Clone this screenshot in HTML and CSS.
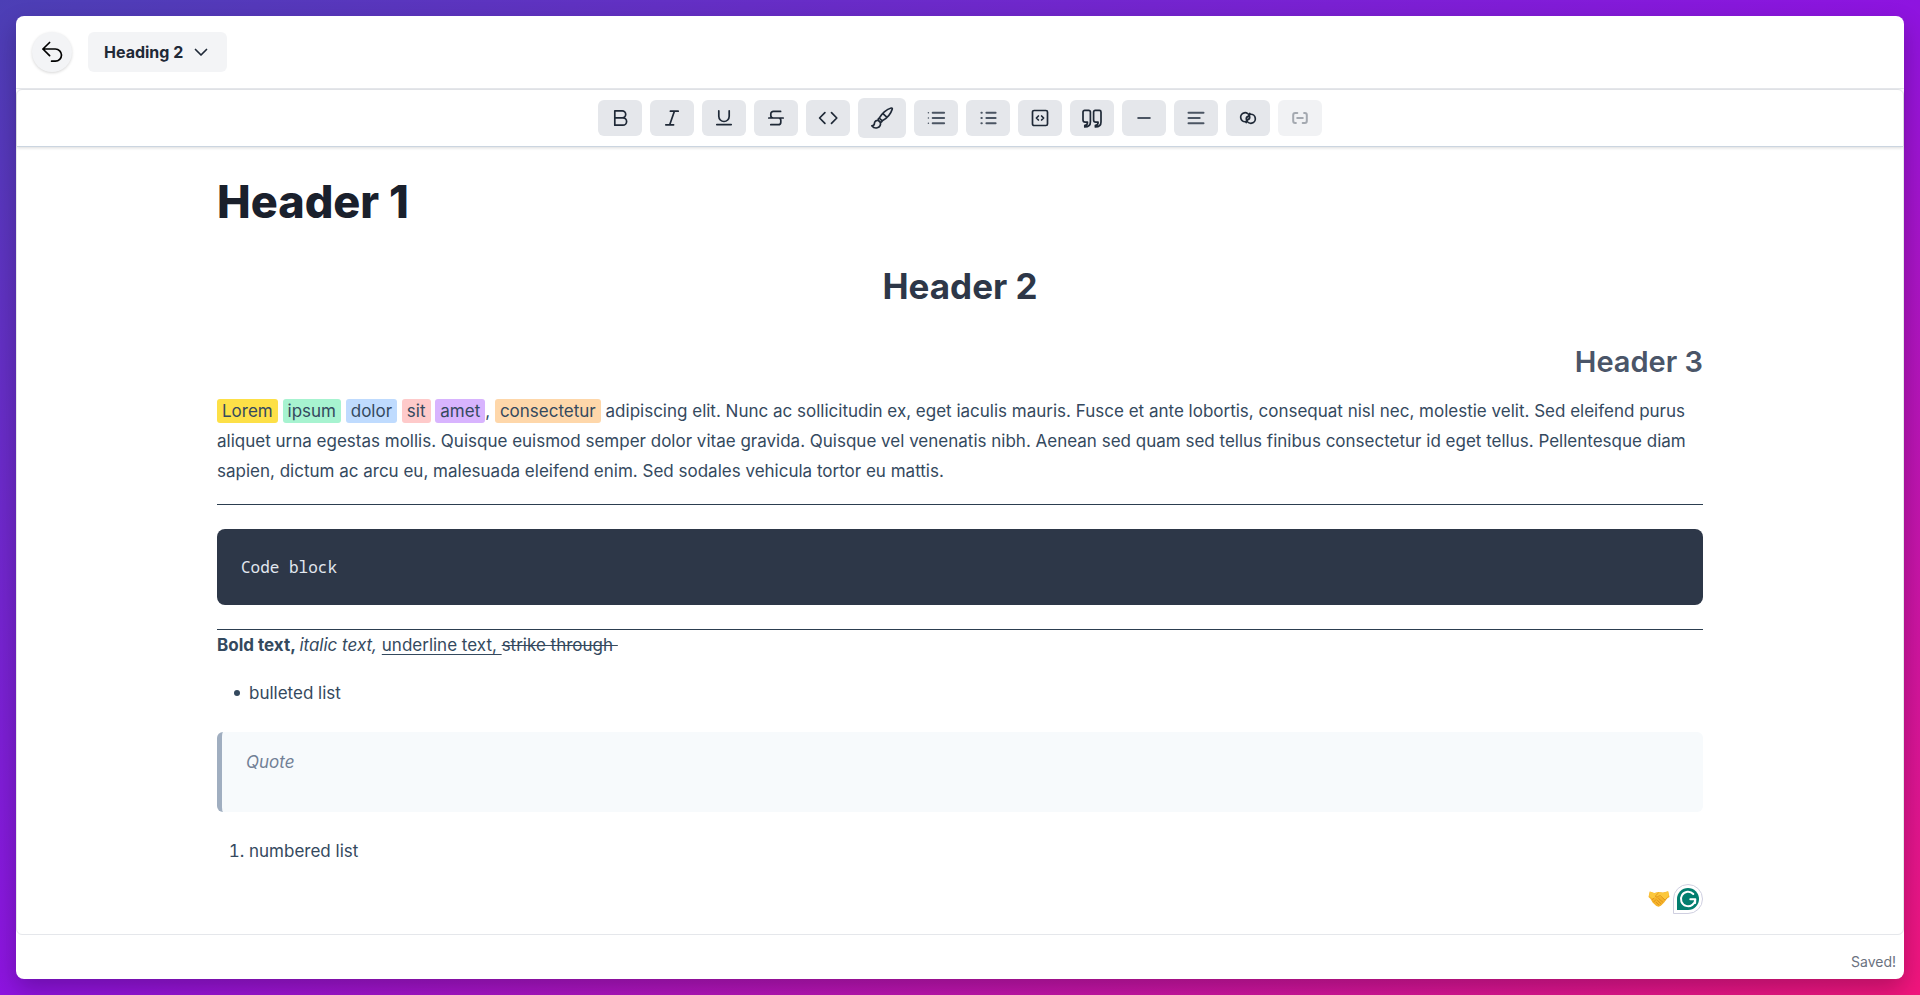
FILE: index.html
```html
<!DOCTYPE html>
<html lang="en">
<head>
<meta charset="utf-8">
<meta name="viewport" content="width=device-width, initial-scale=1">
<title>Editor</title>
<link rel="stylesheet" href="styles.css">
</head>
<body>
<main class="panel">
  <header class="topbar">
    <button class="back" type="button" aria-label="Back">
      <svg class="icon" viewBox="0 0 24 24"><path d="M9.600 2.500 2.900 9l6.700 6.700M2.900 9h12.500a6 6 0 0 1 0 12.200h-3.800"/></svg>
    </button>
    <button class="style-picker" type="button" aria-haspopup="listbox">
      <span>Heading 2</span>
      <svg class="chevron" viewBox="0 0 16 16"><path d="m2.500 5.500 5.500 5.500 5.500-5.500"/></svg>
    </button>
  </header>

  <section class="editor">
    <div class="toolbar" role="toolbar" aria-label="Formatting">
      <button class="tool" type="button" aria-label="Bold"><svg class="icon" viewBox="0 0 24 24"><path d="M6.800 4.800h7.400a3.500 3.500 0 0 1 0 7H6.800zM6.800 11.800h8.100a3.700 3.700 0 0 1 0 7.400H6.800z"/></svg></button>
      <button class="tool" type="button" aria-label="Italic"><svg class="icon" viewBox="0 0 24 24"><path d="M10.400 5.200h7.800M5.800 18.800h7.800M14.400 5.200 9.700 18.800"/></svg></button>
      <button class="tool" type="button" aria-label="Underline"><svg class="icon" viewBox="0 0 24 24"><path d="M6.800 4.800v5.500a5.200 5.200 0 0 0 10.400 0V4.800M4.800 18.600h14.400"/></svg></button>
      <button class="tool" type="button" aria-label="Strikethrough"><svg class="icon" viewBox="0 0 24 24"><path d="M16.600 5.400H9.400a2.600 2.600 0 0 0-2.600 2.600v1.400c0 1.600 1 2.600 2.600 2.600M4.800 12h14.400M14.600 12a2.200 2.200 0 0 1 2.200 2.200v2a2.500 2.500 0 0 1-2.500 2.500H6.800"/></svg></button>
      <button class="tool" type="button" aria-label="Inline code"><svg class="icon" viewBox="0 0 24 24"><path d="M8.900 6.700 3.600 12l5.300 5.300M15.500 6.700l5.300 5.300-5.300 5.300"/></svg></button>
      <button class="tool tool-large" type="button" aria-label="Highlight"><svg class="icon" viewBox="0 0 24 24"><path d="M9.200 12.200C11.500 8 16.500 3 21.200 2c1-.1 1.300.4 1 1.200-1.400 4.500-5.700 9.300-9.900 11.600M9.200 12.200l3.100 2.600M9.200 12.200c-1.100.4-1.300 1.500-.8 2.300M12.300 14.800c-.3 1.100-1.300 1.500-2.200 1.200M13.200 7.800l3.300 3M8.400 14.500c-2-.5-4 .7-4 3 0 1.400-.7 2.200-2.600 2.300 1.300 1.700 3.500 2.500 5.500 2 2.600-.6 4-3.200 2.800-5.800z"/></svg></button>
      <button class="tool soft" type="button" aria-label="Bulleted list"><svg class="icon" viewBox="0 0 24 24"><path d="M8.700 6.700h11.400M8.700 12h11.400M8.700 17.300h11.400"/><path class="dots" d="M4.400 6.700h.01M4.400 12h.01M4.400 17.300h.01"/></svg></button>
      <button class="tool soft" type="button" aria-label="Numbered list"><svg class="icon" viewBox="0 0 24 24"><path d="M10.400 6.700h9.200M10.400 12h9.200M10.400 17.300h9.200M5.400 6.700h.4M5.400 12h.4M5.400 17.300h.4"/></svg></button>
      <button class="tool" type="button" aria-label="Code block"><svg class="icon" viewBox="0 0 24 24"><rect x="4.500" y="4.500" width="15" height="15" rx="1.600"/><path d="m10.400 10-2 2 2 2M13.600 10l2 2-2 2"/></svg></button>
      <button class="tool" type="button" aria-label="Quote"><svg class="icon" viewBox="0 0 24 24"><path d="M4.600 4.400h4.200a1.600 1.600 0 0 1 1.600 1.600v10c0 3.200-1.700 4.900-5.600 4.900v-1.600c1.900 0 2.700-.8 2.700-3.100H5.200a2.200 2.200 0 0 1-2.200-2.200V6a1.600 1.600 0 0 1 1.600-1.600zM15.200 4.400h4.200A1.600 1.600 0 0 1 21 6v10c0 3.200-1.700 4.900-5.600 4.900v-1.600c1.900 0 2.700-.8 2.700-3.100h-2.300a2.200 2.200 0 0 1-2.200-2.200V6a1.600 1.600 0 0 1 1.600-1.600z"/></svg></button>
      <button class="tool soft" type="button" aria-label="Divider"><svg class="icon" viewBox="0 0 24 24"><path d="M6.200 12h11.600"/></svg></button>
      <button class="tool soft" type="button" aria-label="Align left"><svg class="icon" viewBox="0 0 24 24"><path d="M4.500 6.700h15M4.500 12h11.200M4.500 17.300h15"/></svg></button>
      <button class="tool" type="button" aria-label="Link"><svg class="icon" viewBox="0 0 24 24"><path d="M10.200 16.500 9.600 15.700A4.500 4.500 0 1 1 13.500 10c.5 1.700-.4 3.400-2 3.900M13.800 7.500l.6.8A4.500 4.500 0 1 1 10.500 14c-.5-1.700.4-3.400 2-3.900"/></svg></button>
      <button class="tool soft" type="button" aria-label="Remove link" disabled><svg class="icon" viewBox="0 0 24 24"><path d="M9.300 7H7.200a2 2 0 0 0-2 2v6a2 2 0 0 0 2 2h.7M14.700 17h2.100a2 2 0 0 0 2-2V9a2 2 0 0 0-2-2h-.7M9.200 12h5.600"/></svg></button>
    </div>

    <article class="document">
      <h1>Header 1</h1>
      <h2>Header 2</h2>
      <h3>Header 3</h3>
      <p><mark class="yellow">Lorem</mark> <mark class="green">ipsum</mark> <mark class="blue">dolor</mark> <mark class="red">sit</mark> <mark class="purple">amet</mark>, <mark class="orange">consectetur</mark> adipiscing elit. Nunc ac sollicitudin ex, eget iaculis mauris. Fusce et ante lobortis, consequat nisl nec, molestie velit. Sed eleifend purus aliquet urna egestas mollis. Quisque euismod semper dolor vitae gravida. Quisque vel venenatis nibh. Aenean sed quam sed tellus finibus consectetur id eget tellus. Pellentesque diam sapien, dictum ac arcu eu, malesuada eleifend enim. Sed sodales vehicula tortor eu mattis.</p>
      <hr>
      <pre><code>Code block</code></pre>
      <hr class="tight">
      <p class="styles"><strong>Bold text, </strong><em>italic text, </em><u>underline text, </u><s>strike through </s></p>
      <ul><li>bulleted list</li></ul>
      <blockquote>Quote</blockquote>
      <ol><li>numbered list</li></ol>
    </article>

    <div class="assistant">
      <svg class="handshake" viewBox="0 0 22 18" role="img" aria-label="Handshake">
        <path fill="#f5b32a" d="M1.700 1.500 6.200 3l4.200-.9L15 2.600l5.200-1.300 1.300 5.700-2.800 1.700-2.500 3.900-3.300 3.100-2.300 1-2.300-.8-3.500-3.200-2.400-4L.5 7z"/>
        <path fill="#fcc83d" d="M2 1.700 6.400 3.200l4-.9 4.600.6 5-1.300.8 3.600-3.400 4.500-5.200-3.300-3.800.6L5.500 9 1.200 6.200z"/>
        <path fill="none" stroke="#d98c18" stroke-width=".8" stroke-linecap="round" stroke-linejoin="round" d="m10.400 3-3.200 3.200c.9 1.200 2.500.8 3.700-.3l1.500-.2 4.500 4.200M10.700 8.600l4 3.500M9.500 10.500l3.400 3.200M8.200 12.300l2.500 2.500M4.400 9.400l1.700-1.300M5.900 11.800 8 9.600M17.400 9.800l1.600-1.600"/>
      </svg>
      <svg class="badge" viewBox="0 0 30 30" role="img" aria-label="Writing assistant">
        <path fill="#fff" stroke="#cfcfe0" d="M.5 29.500V15A14.500 14.500 0 1 1 15 29.500z"/>
        <path fill="#027e6f" d="M4 26V15a11 11 0 1 1 11 11z"/>
        <path fill="none" stroke="#fff" stroke-width="2" stroke-linecap="round" stroke-linejoin="round" d="M20.300 10a7.200 7.200 0 1 0 2 5.200h-5M22.300 15.200l-.2 3.800"/>
      </svg>
    </div>
  </section>

  <footer class="status">Saved!</footer>
</main>
</body>
</html>
```

FILE: styles.css
```css
* {
  box-sizing: border-box;
}

body {
  margin: 0;
  min-height: 100vh;
  padding: 16px;
  display: flex;
  font-family: Inter, "Noto Sans", sans-serif;
  font-size: 16px;
  color: #34495e;
  background: linear-gradient(to bottom right, #4c3fb5, #8e14e0 50%, #f2157c);
}

button {
  font: inherit;
  color: #1f2937;
  border: 0;
  padding: 0;
  display: flex;
  align-items: center;
  justify-content: center;
  cursor: pointer;
}

.panel {
  flex: 1;
  min-width: 0;
  display: flex;
  flex-direction: column;
  background: #fff;
  border-radius: 8px;
  box-shadow: 0 10px 24px rgba(0, 0, 0, 0.24);
}

.topbar {
  display: flex;
  align-items: center;
  gap: 16px;
  padding: 16px;
  border-bottom: 1px solid #e5e7eb;
}

.back {
  width: 40px;
  height: 40px;
  border-radius: 50%;
  background: #f3f4f6;
  color: #000;
  box-shadow: 0 1px 3px rgba(0, 0, 0, 0.16);
}

.style-picker {
  height: 40px;
  gap: 8px;
  padding: 0 16px;
  border-radius: 6px;
  background: #f3f4f6;
  font-weight: 700;
}

.icon,
.chevron {
  fill: none;
  stroke: currentColor;
  stroke-width: 1.7;
  stroke-linecap: round;
  stroke-linejoin: round;
}

.icon {
  width: 24px;
  height: 24px;
}

.chevron {
  width: 20px;
  height: 16px;
}

.editor {
  flex: 1;
  position: relative;
  display: flex;
  flex-direction: column;
  border: 1px solid #e5e7eb;
  border-radius: 6px;
}

.toolbar {
  display: flex;
  flex-wrap: wrap;
  align-items: center;
  justify-content: center;
  gap: 8px;
  padding: 8px;
  border-bottom: 1px solid #cbd5e0;
  box-shadow: 0 1px 3px rgba(0, 0, 0, 0.14);
}

.tool {
  width: 44px;
  height: 36px;
  border-radius: 6px;
  background: #e5e7eb;
}

.tool-large {
  width: 48px;
  height: 40px;
}

.soft {
  color: #4b5563;
}

.soft .icon {
  stroke-width: 2;
}

.dots {
  stroke-width: 1.5;
}

.tool:disabled {
  opacity: 0.5;
  cursor: default;
}

.document {
  padding: 27px 200px 48px;
  font-size: 17px;
  line-height: 30px;
}

h1,
h2,
h3,
p,
pre,
ul,
ol,
blockquote {
  margin: 0;
}

h1 {
  font-size: 45px;
  line-height: 56px;
  font-weight: 800;
  color: #1a202c;
  margin-bottom: 34px;
}

h2 {
  font-size: 35px;
  line-height: 44px;
  font-weight: 700;
  color: #2d3748;
  text-align: center;
  margin-bottom: 36px;
}

h3 {
  font-size: 29px;
  line-height: 36px;
  font-weight: 600;
  color: #4a5568;
  text-align: right;
  margin-bottom: 16px;
}

mark {
  color: inherit;
  padding: 2px 5px;
  border-radius: 3px;
}

.yellow { background: #fde047; }
.green { background: #a7f3d0; }
.blue { background: #bfdbfe; }
.red { background: #fecaca; }
.purple { background: #d8b4fe; }
.orange { background: #fed7aa; }

hr {
  height: 1px;
  margin: 18px 0 24px;
  border: 0;
  background: #2c3e50;
}

hr.tight {
  margin: 24px 0 0;
}

pre {
  padding: 24px;
  border-radius: 8px;
  background: #2d3748;
  color: #e2e8f0;
  font-family: "Noto Sans Mono", "DejaVu Sans Mono", monospace;
  font-size: 16px;
  line-height: 28px;
}

code {
  font: inherit;
}

.styles {
  white-space: pre-wrap;
}

u {
  text-underline-offset: 3px;
}

ul {
  margin: 18px 0 24px;
  padding-left: 17px;
  list-style: none;
}

ul li {
  display: flex;
  align-items: center;
  gap: 9px;
}

ul li::before {
  content: "";
  width: 6px;
  height: 6px;
  border-radius: 50%;
  background: currentColor;
}

ol {
  padding-left: 32px;
}

blockquote {
  min-height: 80px;
  margin-bottom: 24px;
  padding: 15px 24px;
  border-left: 5px solid #a0aec0;
  border-radius: 6px;
  background: #f7fafc;
  color: #718096;
  font-style: italic;
}

.assistant {
  position: absolute;
  right: 200px;
  bottom: 20px;
  display: flex;
  align-items: center;
  gap: 3px;
}

.handshake {
  width: 22px;
  height: 18px;
}

.badge {
  width: 30px;
  height: 30px;
}

.status {
  padding: 17px 8px 7px;
  font-size: 14px;
  line-height: 20px;
  text-align: right;
  color: #6b7280;
}
```
